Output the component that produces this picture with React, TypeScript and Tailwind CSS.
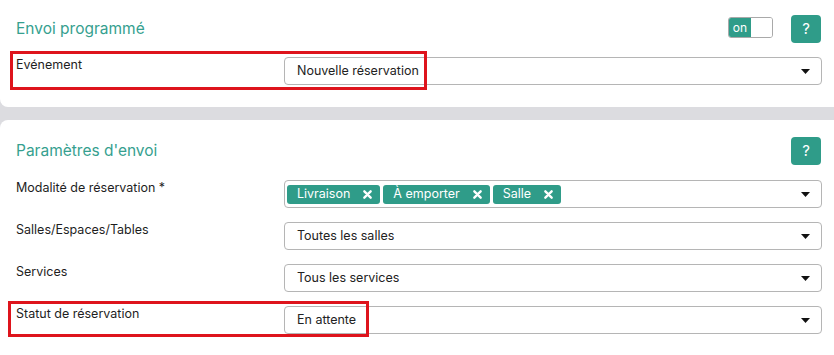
import type { ReactNode } from 'react';

const font = { fontFamily: 'Inter, "Noto Sans", sans-serif' };

function Caret() {
  return (
    <svg width="9" height="5" viewBox="0 0 9 5" className="shrink-0">
      <path d="M0 0 L9 0 L4.5 5 Z" fill="#111" />
    </svg>
  );
}

function HelpButton() {
  return (
    <button className="w-[30px] h-[28px] rounded-[4px] bg-[#2f9c89] text-white text-[15px] flex items-center justify-center">
      ?
    </button>
  );
}

function Select({ children, tags }: { children: ReactNode; tags?: boolean }) {
  return (
    <div
      className={`w-[538px] h-[28px] shrink-0 border border-[#b5b5b5] rounded-[4px] bg-white flex items-center justify-between pr-[11px] text-[12.5px] text-[#222] ${
        tags ? 'pl-[2px]' : 'pl-[12px]'
      }`}
    >
      <div className="flex items-center gap-[3px]">{children}</div>
      <Caret />
    </div>
  );
}

function Tag({ label }: { label: string }) {
  return (
    <span className="h-[19px] rounded-[3px] bg-[#2f9c89] text-white text-[12.5px] flex items-center pl-[10px] pr-[8px] gap-[13px]">
      {label}
      <svg width="9" height="9" viewBox="0 0 10 10">
        <path d="M1.5 1.5 L8.5 8.5 M8.5 1.5 L1.5 8.5" stroke="white" strokeWidth="2.6" strokeLinecap="round" />
      </svg>
    </span>
  );
}

function Row({ label, children, highlight }: { label: string; children: ReactNode; highlight?: string }) {
  return (
    <div className="relative flex items-start">
      <div className="w-[284px] shrink-0 pl-[16px] text-[12.5px] leading-4 text-[#1e1e1e]">{label}</div>
      {children}
      {highlight && <div className={`absolute border-[3px] border-[#de141c] ${highlight}`} />}
    </div>
  );
}

export default function App() {
  return (
    <div className="w-[834px] h-[355px] overflow-hidden bg-[#dcdce0]" style={font}>
      {/* Envoi programmé */}
      <div className="bg-white rounded-bl-lg h-[107px] pt-[15px] pr-[13px]">
        <div className="flex items-center justify-between h-[28px]">
          <h2 className="pl-[16px] text-[15.5px] text-[#369f8f]">Envoi programmé</h2>
          <div className="flex items-center gap-[18px]">
            <div className="flex w-[45px] h-[21px] border border-[#a9a9a9] rounded-[3px] overflow-hidden -mt-[3px]">
              <span className="w-[22px] bg-[#2f9c89] text-white text-[12px] flex items-center justify-center">on</span>
              <span className="flex-1 bg-white" />
            </div>
            <HelpButton />
          </div>
        </div>
        <div className="mt-[14px]">
          <Row label="Evénement" highlight="left-[10px] -top-[6px] w-[417px] h-[39px]">
            <Select>Nouvelle réservation</Select>
          </Row>
        </div>
      </div>

      {/* Paramètres d'envoi */}
      <div className="bg-white rounded-tl-lg mt-[13px] h-[300px] pt-[17px] pr-[13px]">
        <div className="flex items-center justify-between h-[28px]">
          <h2 className="pl-[16px] text-[15.5px] text-[#369f8f]">Paramètres d'envoi</h2>
          <HelpButton />
        </div>
        <div className="mt-[15px] flex flex-col gap-[14px]">
          <Row label="Modalité de réservation *">
            <Select tags>
              <Tag label="Livraison" />
              <Tag label="À emporter" />
              <Tag label="Salle" />
            </Select>
          </Row>
          <Row label="Salles/Espaces/Tables">
            <Select>Toutes les salles</Select>
          </Row>
          <Row label="Services">
            <Select>Tous les services</Select>
          </Row>
          <Row label="Statut de réservation" highlight="left-[8px] -top-[5px] w-[361px] h-[36px]">
            <Select>En attente</Select>
          </Row>
        </div>
      </div>
    </div>
  );
}
